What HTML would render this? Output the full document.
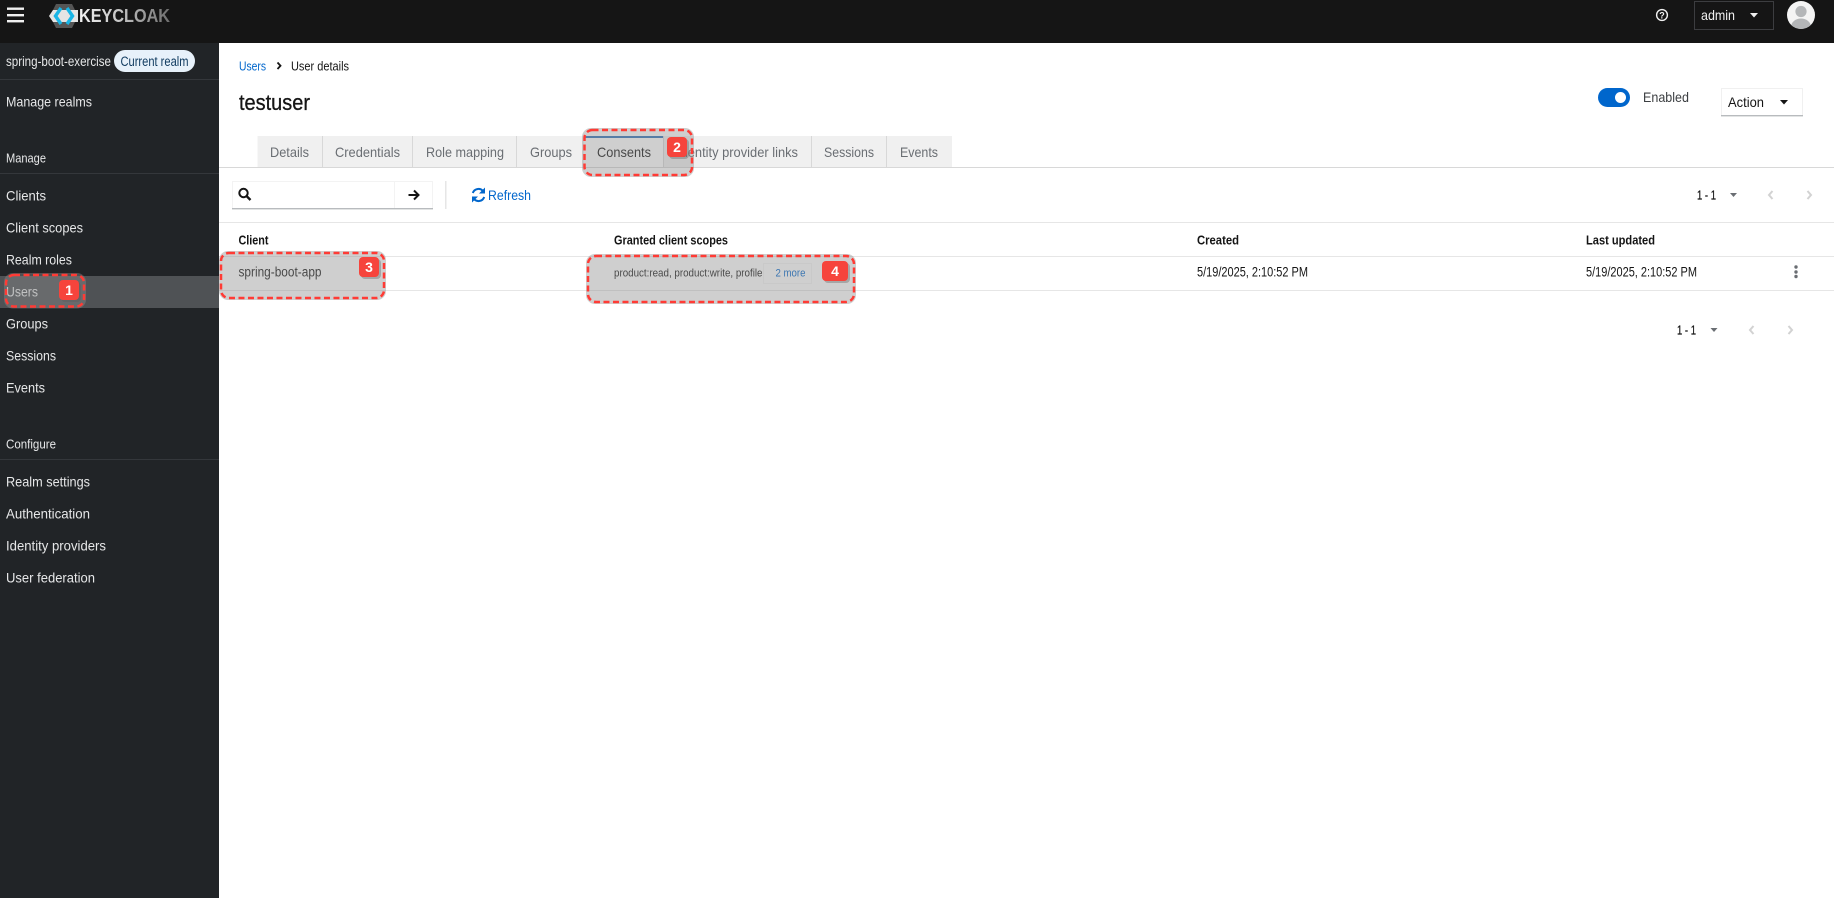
<!DOCTYPE html>
<html lang="en">
<head>
<meta charset="utf-8">
<title>Keycloak - User details</title>
<style>
html,body{margin:0;padding:0;background:#fff;width:1834px;height:898px;overflow:hidden}
svg{display:block;filter:blur(.35px)}
text{font-family:"Liberation Sans",sans-serif;white-space:pre}
.s{fill:#e6e7e8;font-size:14px}
.h{fill:#e6e7e8;font-size:13px}
.t{fill:#6a6e73;font-size:14px}
.d{fill:#151515;font-size:13.5px}
.b{fill:#151515;font-size:13px;font-weight:bold}
.p{fill:#151515;font-size:13px;stroke:#151515;stroke-width:.25}
.n{fill:#fff;font-size:14px;font-weight:bold;text-anchor:middle}
.hl{fill:rgba(140,140,140,.42)}
.da{fill:none;stroke:#ff3b35;stroke-width:2.5;stroke-dasharray:6 3.5}
.bd{fill:#f6443c}
.bs{fill:rgba(90,90,90,.35)}
</style>
</head>
<body>
<svg xmlns="http://www.w3.org/2000/svg" width="1834" height="898" viewBox="0 0 1834 898">
<defs>
<linearGradient id="kc" gradientUnits="userSpaceOnUse" x1="79" y1="0" x2="172" y2="0">
<stop offset="0" stop-color="#f2f2f2"/><stop offset=".45" stop-color="#c4c4c4"/><stop offset="1" stop-color="#6a6a6a"/>
</linearGradient>
<clipPath id="av"><circle cx="1801" cy="15" r="14"/></clipPath>
</defs>

<!-- masthead -->
<rect width="1834" height="43" fill="#151515"/>
<g fill="#f0f0f0">
<rect x="7" y="7.5" width="17" height="2.4"/><rect x="7" y="14" width="17" height="2.4"/><rect x="7" y="20" width="17" height="2.4"/>
</g>
<polygon points="56,4 72,4 78,16 72,28 56,28 50,16" fill="#555"/>
<polygon points="49,16 53,10 78,10 78,22 53,22" fill="#e4e4e4"/>
<path d="M61,8 L55.5,16 L61,24 M67,8 L72.5,16 L67,24" fill="none" stroke="#19b5e6" stroke-width="3.4"/>
<text x="79" y="22" font-size="18" font-weight="bold" fill="url(#kc)" textLength="91" lengthAdjust="spacingAndGlyphs">KEYCLOAK</text>

<circle cx="1662" cy="15" r="5.4" fill="none" stroke="#f0f0f0" stroke-width="1.4"/>
<text x="1662" y="18.3" font-size="9" font-weight="bold" fill="#f0f0f0" text-anchor="middle">?</text>
<rect x="1694.5" y="1.5" width="79" height="28" fill="none" stroke="#3c3d40"/>
<text x="1701" y="20" font-size="14" fill="#f0f0f0" textLength="34" lengthAdjust="spacingAndGlyphs">admin</text>
<polygon points="1750,13 1758,13 1754,17.5" fill="#f0f0f0"/>
<circle cx="1801" cy="15" r="14" fill="#f4f4f4"/>
<g clip-path="url(#av)" fill="#b4b6b8">
<circle cx="1801" cy="11.5" r="5.6"/>
<ellipse cx="1801" cy="27" rx="10" ry="8.5"/>
</g>

<!-- sidebar -->
<rect x="0" y="43" width="219" height="855" fill="#212427"/>
<text class="s" x="6" y="66" textLength="105" lengthAdjust="spacingAndGlyphs">spring-boot-exercise</text>
<rect x="114" y="50" width="81" height="22" rx="11" fill="#e7f1fa"/>
<text x="120.5" y="66" font-size="13.5" fill="#0f3a5f" textLength="68" lengthAdjust="spacingAndGlyphs">Current realm</text>
<rect x="0" y="79" width="219" height="1" fill="#34373b"/>
<text class="s" x="6" y="106.5" textLength="86" lengthAdjust="spacingAndGlyphs">Manage realms</text>
<text class="h" x="6" y="162.5" textLength="40" lengthAdjust="spacingAndGlyphs">Manage</text>
<rect x="0" y="173" width="219" height="1" fill="#34373b"/>
<text class="s" x="6" y="200.5" textLength="40" lengthAdjust="spacingAndGlyphs">Clients</text>
<text class="s" x="6" y="232.5" textLength="77" lengthAdjust="spacingAndGlyphs">Client scopes</text>
<text class="s" x="6" y="264.5" textLength="66" lengthAdjust="spacingAndGlyphs">Realm roles</text>
<rect x="0" y="276" width="219" height="32" fill="#4f5255"/>
<text class="s" x="6" y="296.5" textLength="32" lengthAdjust="spacingAndGlyphs">Users</text>
<text class="s" x="6" y="328.5" textLength="42" lengthAdjust="spacingAndGlyphs">Groups</text>
<text class="s" x="6" y="360.5" textLength="50" lengthAdjust="spacingAndGlyphs">Sessions</text>
<text class="s" x="6" y="392.5" textLength="39" lengthAdjust="spacingAndGlyphs">Events</text>
<text class="h" x="6" y="448.5" textLength="50" lengthAdjust="spacingAndGlyphs">Configure</text>
<rect x="0" y="459" width="219" height="1" fill="#34373b"/>
<text class="s" x="6" y="486.5" textLength="84" lengthAdjust="spacingAndGlyphs">Realm settings</text>
<text class="s" x="6" y="518.5" textLength="84" lengthAdjust="spacingAndGlyphs">Authentication</text>
<text class="s" x="6" y="550.5" textLength="100" lengthAdjust="spacingAndGlyphs">Identity providers</text>
<text class="s" x="6" y="582.5" textLength="89" lengthAdjust="spacingAndGlyphs">User federation</text>

<!-- breadcrumb + title -->
<text x="239" y="70.5" font-size="13" fill="#0066cc" textLength="27" lengthAdjust="spacingAndGlyphs">Users</text>
<path d="M277.5,62.5 L280.5,65.8 L277.5,69" fill="none" stroke="#151515" stroke-width="1.8"/>
<text x="291" y="70.5" font-size="13" fill="#151515" textLength="58" lengthAdjust="spacingAndGlyphs">User details</text>
<text x="239" y="110" font-size="22" fill="#151515" stroke="#151515" stroke-width=".3" textLength="71" lengthAdjust="spacingAndGlyphs">testuser</text>

<!-- enabled / action -->
<rect x="1598" y="88" width="32" height="19" rx="9.5" fill="#0066cc"/>
<circle cx="1620.5" cy="97.5" r="5.5" fill="#fff"/>
<text x="1643" y="102" font-size="14" fill="#3c3f42" textLength="46" lengthAdjust="spacingAndGlyphs">Enabled</text>
<rect x="1721.5" y="88.5" width="81" height="27" fill="none" stroke="#f0f0f0"/>
<rect x="1721" y="115" width="82" height="1.4" fill="#b8bbbe"/>
<text x="1728" y="107" font-size="14" fill="#151515" textLength="36" lengthAdjust="spacingAndGlyphs">Action</text>
<polygon points="1780,100 1788,100 1784,104.5" fill="#151515"/>

<!-- tabs -->
<rect x="257.5" y="136" width="694.5" height="31" fill="#f0f0f0"/>
<rect x="584" y="136" width="79" height="31" fill="#fff"/>
<rect x="584" y="136" width="79" height="2" fill="#2f72b8"/>
<g fill="#d8d8d8">
<rect x="322" y="136" width="1" height="31"/><rect x="412" y="136" width="1" height="31"/><rect x="516" y="136" width="1" height="31"/>
<rect x="663" y="136" width="1" height="31"/><rect x="811" y="136" width="1" height="31"/><rect x="886" y="136" width="1" height="31"/>
<rect x="219" y="167" width="1615" height="1"/>
</g>
<text class="t" x="270" y="157" textLength="39" lengthAdjust="spacingAndGlyphs">Details</text>
<text class="t" x="335" y="157" textLength="65" lengthAdjust="spacingAndGlyphs">Credentials</text>
<text class="t" x="426" y="157" textLength="78" lengthAdjust="spacingAndGlyphs">Role mapping</text>
<text class="t" x="530" y="157" textLength="42" lengthAdjust="spacingAndGlyphs">Groups</text>
<text x="597" y="157" font-size="14" fill="#151515" textLength="54" lengthAdjust="spacingAndGlyphs">Consents</text>
<text class="t" x="677" y="157" textLength="121" lengthAdjust="spacingAndGlyphs">Identity provider links</text>
<text class="t" x="824" y="157" textLength="50" lengthAdjust="spacingAndGlyphs">Sessions</text>
<text class="t" x="900" y="157" textLength="38" lengthAdjust="spacingAndGlyphs">Events</text>

<!-- toolbar -->
<rect x="232.5" y="181.5" width="200" height="27" fill="none" stroke="#f3f3f3"/>
<rect x="394" y="181" width="1" height="28" fill="#f3f3f3"/>
<rect x="232" y="208" width="201" height="1.4" fill="#b8bbbe"/>
<circle cx="243.5" cy="193" r="4.2" fill="none" stroke="#151515" stroke-width="2"/>
<path d="M246.5,196 L250.5,200" stroke="#151515" stroke-width="2.4"/>
<path d="M408.5,195 L418,195 M414,190.5 L418.5,195 L414,199.5" fill="none" stroke="#151515" stroke-width="2"/>
<rect x="445" y="181" width="1.5" height="28" fill="#e6e6e6"/>
<path d="M472.8,193 A6,6 0 0 1 482.8,190.8 M484.2,197 A6,6 0 0 1 474.2,199.2" fill="none" stroke="#0066cc" stroke-width="2"/>
<polygon points="485,187.5 485,193.5 479,193.5" fill="#0066cc"/>
<polygon points="472,202.5 472,196.5 478,196.5" fill="#0066cc"/>
<text x="488" y="200" font-size="14" fill="#0066cc" textLength="43" lengthAdjust="spacingAndGlyphs">Refresh</text>

<text class="p" x="1697" y="199.5" textLength="19" lengthAdjust="spacingAndGlyphs">1 - 1</text>
<polygon points="1730,193 1737,193 1733.5,197" fill="#6a6e73"/>
<path d="M1772.5,191 L1769,195 L1772.5,199" fill="none" stroke="#d2d2d2" stroke-width="2"/>
<path d="M1807.5,191 L1811,195 L1807.5,199" fill="none" stroke="#d2d2d2" stroke-width="2"/>

<!-- table -->
<g fill="#e6e6e6">
<rect x="219" y="222" width="1615" height="1"/>
<rect x="219" y="256" width="1615" height="1"/>
<rect x="219" y="290" width="1615" height="1"/>
</g>
<text class="b" x="238.5" y="244.5" textLength="30" lengthAdjust="spacingAndGlyphs">Client</text>
<text class="b" x="614" y="244.5" textLength="114" lengthAdjust="spacingAndGlyphs">Granted client scopes</text>
<text class="b" x="1197" y="244.5" textLength="42" lengthAdjust="spacingAndGlyphs">Created</text>
<text class="b" x="1586" y="244.5" textLength="69" lengthAdjust="spacingAndGlyphs">Last updated</text>

<text class="d" x="238.5" y="276.5" textLength="83" lengthAdjust="spacingAndGlyphs">spring-boot-app</text>
<text x="614" y="276.5" font-size="11" fill="#151515" textLength="148.5" lengthAdjust="spacingAndGlyphs">product:read, product:write, profile</text>
<rect x="763.5" y="263.5" width="48" height="20" fill="none" stroke="#f5f5f5"/>
<text x="775.5" y="276.5" font-size="11" fill="#0066cc" textLength="30" lengthAdjust="spacingAndGlyphs">2 more</text>
<text class="d" x="1197" y="276.5" textLength="111" lengthAdjust="spacingAndGlyphs">5/19/2025, 2:10:52 PM</text>
<text class="d" x="1586" y="276.5" textLength="111" lengthAdjust="spacingAndGlyphs">5/19/2025, 2:10:52 PM</text>
<g fill="#6a6e73"><circle cx="1796" cy="267" r="1.7"/><circle cx="1796" cy="272" r="1.7"/><circle cx="1796" cy="276.5" r="1.7"/></g>

<text class="p" x="1677" y="334.5" textLength="19" lengthAdjust="spacingAndGlyphs">1 - 1</text>
<polygon points="1710.5,328 1717.5,328 1714,332" fill="#6a6e73"/>
<path d="M1753.5,326 L1750,330 L1753.5,334" fill="none" stroke="#d2d2d2" stroke-width="2"/>
<path d="M1788.5,326 L1792,330 L1788.5,334" fill="none" stroke="#d2d2d2" stroke-width="2"/>

<!-- annotation overlays -->
<rect class="hl" x="4" y="273" width="82" height="35.5" rx="9"/>
<rect class="da" x="6" y="275" width="78" height="31.5" rx="8"/>
<rect class="bs" x="61" y="282" width="20" height="20" rx="4"/>
<rect class="bd" x="59" y="280" width="20" height="20" rx="4"/>
<text class="n" x="69" y="295">1</text>

<rect class="hl" x="582" y="128" width="112" height="49" rx="9"/>
<rect class="da" x="584.5" y="130" width="107.5" height="45" rx="8"/>
<rect class="bs" x="669" y="139" width="20" height="20" rx="4"/>
<rect class="bd" x="667" y="137" width="20" height="20" rx="4"/>
<text class="n" x="677" y="152">2</text>

<rect class="hl" x="219" y="251" width="167" height="49" rx="9"/>
<rect class="da" x="221" y="253" width="163" height="45" rx="8"/>
<rect class="bs" x="361" y="259" width="20" height="20" rx="4"/>
<rect class="bd" x="359" y="257" width="20" height="20" rx="4"/>
<text class="n" x="369" y="272">3</text>

<rect class="hl" x="586" y="254" width="270" height="50" rx="9"/>
<rect class="da" x="588" y="256" width="266" height="46" rx="8"/>
<rect class="bs" x="824" y="263" width="26" height="20" rx="4"/>
<rect class="bd" x="822" y="261" width="26" height="20" rx="4"/>
<text class="n" x="835" y="276">4</text>
</svg>
</body>
</html>
